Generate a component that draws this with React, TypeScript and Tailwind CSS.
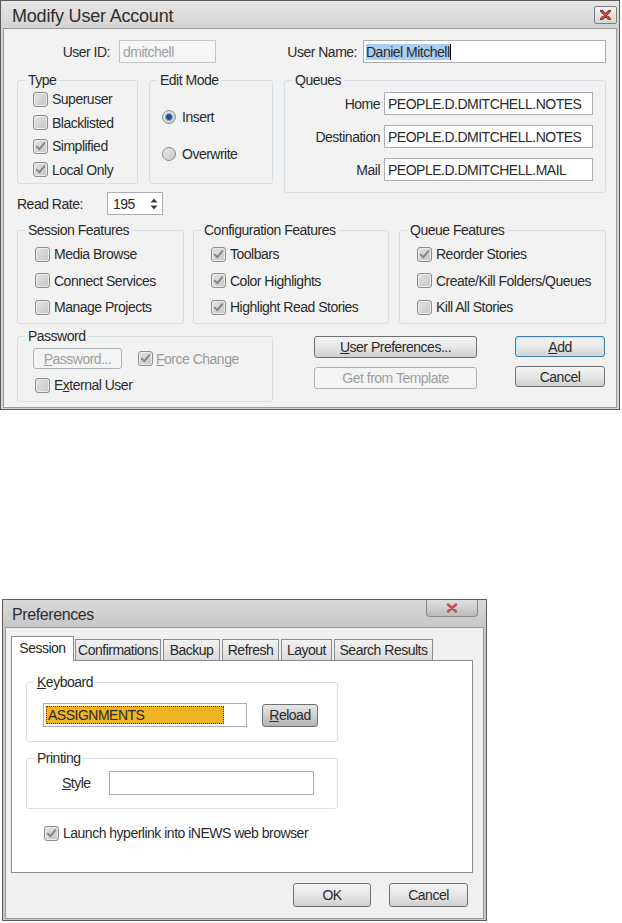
import React from "react";

function CheckBox({ checked }: { checked?: boolean }) {
  return (
    <span className="flex h-[15px] w-[15px] shrink-0 items-center justify-center rounded-[3px] border border-[#8a8b8b] bg-linear-to-br from-[#e4e4e4] to-[#c6c6c6] shadow-[inset_0_0_0_1px_#ececec]">
      {checked && (
        <svg width="11" height="11" viewBox="0 0 11 11">
          <path d="M1.8 5.6 L4.4 8.2 L9.3 2.2" fill="none" stroke="#858585" strokeWidth="2" strokeLinecap="round" strokeLinejoin="round" />
        </svg>
      )}
    </span>
  );
}

function Check({ checked, label, gray, className }: { checked?: boolean; label: React.ReactNode; gray?: boolean; className?: string }) {
  return (
    <div className={"flex h-[20px] items-center gap-[4px] " + (className ?? "")}>
      <CheckBox checked={checked} />
      <span className={gray ? "text-[#9a9a9a]" : ""}>{label}</span>
    </div>
  );
}

function Radio({ checked }: { checked?: boolean }) {
  return (
    <span className="flex h-[14px] w-[14px] shrink-0 items-center justify-center rounded-full border border-[#8a8b8b] bg-linear-to-br from-[#ebebeb] to-[#c8c8c8]">
      {checked && <span className="h-[8px] w-[8px] rounded-full border-[1.5px] border-[#86b1d8] bg-[#21507f]" />}
    </span>
  );
}

function Group({ title, className, children }: { title: React.ReactNode; className?: string; children?: React.ReactNode }) {
  return (
    <fieldset className={"shrink-0 rounded-[3px] border border-[#d5dfe5] " + (className ?? "")}>
      <legend className="ml-[7px] px-[3px] leading-[16px]">{title}</legend>
      {children}
    </fieldset>
  );
}

function Btn({ children, className, disabled, def, dark }: { children: React.ReactNode; className?: string; disabled?: boolean; def?: boolean; dark?: boolean }) {
  let cls = "flex shrink-0 items-center justify-center rounded-[3px] border ";
  if (disabled) cls += "border-[#adb2b5] bg-[#f4f4f4] text-[#a0a0a0] ";
  else if (def) cls += "border-[#3c7fb1] bg-linear-to-b from-[#f2f2f2] via-[#e9e9e9] to-[#d2d2d2] shadow-[inset_0_0_0_1px_#bfe3f7] ";
  else if (dark) cls += "border-[#6f6f6f] bg-linear-to-b from-[#e6e6e6] via-[#cfcfcf] to-[#b4b4b4] ";
  else cls += "border-[#707070] bg-linear-to-b from-[#f3f3f3] via-[#e7e7e7] to-[#cfcfcf] ";
  return <div className={cls + (className ?? "")}>{children}</div>;
}

function Tab({ children, className }: { children: React.ReactNode; className?: string }) {
  return (
    <div className={"flex h-[21px] shrink-0 items-center justify-center border border-b-0 border-[#898c95] bg-linear-to-b from-[#f3f3f3] to-[#dadada] " + (className ?? "")}>
      {children}
    </div>
  );
}

export default function App() {
  const queues: [string, string][] = [
    ["Home", "PEOPLE.D.DMITCHELL.NOTES"],
    ["Destination", "PEOPLE.D.DMITCHELL.NOTES"],
    ["Mail", "PEOPLE.D.DMITCHELL.MAIL"],
  ];
  return (
    <div className="flex min-h-[923px] w-[622px] flex-col bg-white font-['Liberation_Sans',Arial,sans-serif] text-[14px] leading-[16px] tracking-[-0.5px] text-[#2a2a2a]">
      {/* Modify User Account dialog */}
      <div className="flex h-[410px] w-[620px] flex-col border border-[#5b5b5b] bg-[#d2d2d2]">
        <div className="flex h-[27px] shrink-0 items-center justify-between bg-linear-to-b from-[#e6e6e6] to-[#d4d4d4] pl-[11px] pr-[2px]">
          <span className="pt-[2px] text-[18px] leading-[20px] tracking-[-0.2px] text-[#2e2e2e]">Modify User Account</span>
          <div className="flex h-[18px] w-[23px] items-center justify-center rounded-[2px] border border-[#7b7b7b] bg-linear-to-b from-[#f4f4f4] to-[#d5d5d5]">
            <svg width="11" height="10" viewBox="0 0 11 10">
              <path d="M1.5 1 L9.5 9 M9.5 1 L1.5 9" stroke="#7a2a22" strokeWidth="3" strokeLinecap="round" />
              <path d="M1.5 1 L9.5 9 M9.5 1 L1.5 9" stroke="#d0473a" strokeWidth="1.6" strokeLinecap="round" />
            </svg>
          </div>
        </div>
        <div className="mx-[2px] mb-[1px] flex flex-1 flex-col border border-[#9a9a9a] bg-[#f2f2f2] pl-[13px]">
          {/* row 1 */}
          <div className="mt-[11px] flex h-[23px] items-center">
            <span className="w-[93px] text-right">User ID:</span>
            <div className="ml-[9px] flex h-[23px] w-[97px] items-center border border-[#c6c6c6] bg-[#f6f6f6] pl-[3px] text-[#a0a0a0]">dmitchell</div>
            <span className="w-[141px] text-right">User Name:</span>
            <div className="ml-[6px] flex h-[23px] w-[243px] items-center border border-[#abadb3] bg-white pl-[2px]">
              <span className="bg-[#a9cdf0] leading-[16px]">Daniel Mitchell</span>
              <span className="h-[16px] w-[1px] bg-black" />
            </div>
          </div>

          {/* row 2 */}
          <div className="mt-[9px] flex items-start">
            <div className="flex flex-col">
              <div className="flex gap-[11px]">
                <Group title="Type" className="h-[112px] w-[121px]">
                  <div className="mt-[1px] flex flex-col gap-[3.5px] pl-[15px]">
                    <Check label="Superuser" />
                    <Check label="Blacklisted" />
                    <Check checked label="Simplified" />
                    <Check checked label="Local Only" />
                  </div>
                </Group>
                <Group title="Edit Mode" className="h-[112px] w-[124px]">
                  <div className="mt-[19px] flex flex-col gap-[17px] pl-[12px]">
                    <div className="flex h-[20px] items-center gap-[6px]">
                      <Radio checked />
                      <span>Insert</span>
                    </div>
                    <div className="flex h-[20px] items-center gap-[6px]">
                      <Radio />
                      <span>Overwrite</span>
                    </div>
                  </div>
                </Group>
              </div>
              <div className="mt-[8px] flex h-[23px] items-center">
                <span className="w-[90px]">Read Rate:</span>
                <div className="flex h-[23px] w-[56px] items-center justify-between border border-[#abadb3] bg-white pl-[5px] pr-[4px]">
                  <span>195</span>
                  <svg width="8" height="14" viewBox="0 0 8 14">
                    <path d="M4 1.5 L7.5 5.5 L0.5 5.5 Z M4 12.5 L7.5 8.5 L0.5 8.5 Z" fill="#404040" />
                  </svg>
                </div>
              </div>
            </div>
            <Group title="Queues" className="ml-[11px] h-[121px] w-[322px]">
              <div className="mt-[4px] flex flex-col gap-[10px]">
                {queues.map(([l, v]) => (
                  <div key={l} className="flex items-center">
                    <span className="w-[95px] text-right">{l}</span>
                    <div className="ml-[4px] flex h-[23px] w-[209px] items-center border border-[#abadb3] bg-white pl-[3px]">{v}</div>
                  </div>
                ))}
              </div>
            </Group>
          </div>

          {/* row 3 */}
          <div className="mt-[7px] flex">
            <Group title="Session Features" className="h-[102px] w-[167px]">
              <div className="mt-[6px] flex flex-col gap-[6.5px] pl-[17px]">
                <Check label="Media Browse" />
                <Check label="Connect Services" />
                <Check label="Manage Projects" />
              </div>
            </Group>
            <Group title="Configuration Features" className="ml-[9px] h-[102px] w-[196px]">
              <div className="mt-[6px] flex flex-col gap-[6.5px] pl-[17px]">
                <Check checked label="Toolbars" />
                <Check checked label="Color Highlights" />
                <Check checked label="Highlight Read Stories" />
              </div>
            </Group>
            <Group title="Queue Features" className="ml-[10px] h-[102px] w-[207px]">
              <div className="mt-[6px] flex flex-col gap-[6.5px] pl-[17px]">
                <Check checked label="Reorder Stories" />
                <Check label="Create/Kill Folders/Queues" />
                <Check label="Kill All Stories" />
              </div>
            </Group>
          </div>

          {/* row 4 */}
          <div className="mt-[4px] flex items-start">
            <Group title="Password" className="h-[74px] w-[256px]">
              <div className="mt-[4px] flex items-center pl-[15px]">
                <Btn disabled className="h-[21px] w-[89px]">
                  <span>
                    <u>P</u>assword...
                  </span>
                </Btn>
                <div className="ml-[16px] flex items-center gap-[3px]">
                  <CheckBox checked />
                  <span className="text-[#9a9a9a]">
                    <u>F</u>orce Change
                  </span>
                </div>
              </div>
              <Check
                className="ml-[17px] mt-[6px]"
                label={
                  <>
                    E<u>x</u>ternal User
                  </>
                }
              />
            </Group>
            <div className="ml-[41px] mt-[8px] flex flex-col gap-[9px]">
              <Btn className="h-[22px] w-[163px]">
                <span>
                  <u>U</u>ser Preferences...
                </span>
              </Btn>
              <Btn disabled className="h-[22px] w-[163px]">
                Get from Template
              </Btn>
            </div>
            <div className="ml-[38px] mt-[8px] flex flex-col gap-[9px]">
              <Btn def className="h-[21px] w-[90px]">
                <span>
                  <u>A</u>dd
                </span>
              </Btn>
              <Btn className="h-[21px] w-[90px]">Cancel</Btn>
            </div>
          </div>
        </div>
      </div>

      {/* Preferences dialog */}
      <div className="ml-[2px] mt-[189px] flex h-[322px] w-[485px] flex-col border border-[#5b5b5b] bg-[#c8c8c8]">
        <div className="flex h-[27px] shrink-0 items-start justify-between bg-linear-to-b from-[#dadada] to-[#c6c6c6] pl-[9px] pr-[8px]">
          <span className="mt-[6px] text-[16px] leading-[18px] tracking-[-0.4px] text-[#2e2e2e]">Preferences</span>
          <div className="flex h-[17px] w-[52px] items-center justify-center rounded-b-[4px] border border-t-0 border-[#8a8a8a] bg-linear-to-b from-[#dedede] to-[#bdbdbd]">
            <svg width="12" height="10" viewBox="0 0 12 10">
              <path d="M2 1.5 L10 8.5 M10 1.5 L2 8.5" stroke="#c64a4f" strokeWidth="2.4" strokeLinecap="round" />
            </svg>
          </div>
        </div>
        <div className="mx-[2px] mb-[1px] flex flex-1 flex-col border border-[#9a9a9a] bg-[#f0f0f0]">
          {/* tabs */}
          <div className="ml-[5px] mt-[8px] flex items-end">
            <div className="relative z-10 -mb-px flex h-[25px] w-[63px] shrink-0 items-center justify-center border border-b-0 border-[#898c95] bg-white pb-[2px]">
              Session
            </div>
            <Tab className="ml-[1px] w-[86px]">Confirmations</Tab>
            <Tab className="ml-[2px] w-[57px]">Backup</Tab>
            <Tab className="ml-[2px] w-[57px]">Refresh</Tab>
            <Tab className="ml-[2px] w-[51px]">Layout</Tab>
            <Tab className="ml-[2px] w-[99px]">Search Results</Tab>
          </div>
          {/* panel */}
          <div className="ml-[5px] flex h-[213px] w-[462px] flex-col border border-[#898c95] bg-white">
            <Group
              title={
                <>
                  <u>K</u>eyboard
                </>
              }
              className="ml-[14px] mt-[13px] h-[68px] w-[312px]"
            >
              <div className="mt-[13px] flex items-center pl-[16px]">
                <div className="flex h-[24px] w-[204px] items-center border border-[#abadb3] bg-white">
                  <div className="ml-[2px] flex h-[18px] w-[178px] items-center border border-dotted border-[#3a3a3a] bg-[#f0b323] pl-[1px]">
                    ASSIGNMENTS
                  </div>
                </div>
                <Btn dark className="ml-[15px] h-[23px] w-[56px]">
                  <span>
                    <u>R</u>eload
                  </span>
                </Btn>
              </div>
            </Group>
            <Group title="Printing" className="ml-[14px] mt-[8px] h-[59px] w-[312px]">
              <div className="mt-[5px] flex items-center pl-[35px]">
                <span className="w-[47px]">
                  <u>S</u>tyle
                </span>
                <div className="h-[24px] w-[205px] border border-[#abadb3] bg-white" />
              </div>
            </Group>
            <Check checked className="ml-[32px] mt-[14px]" label="Launch hyperlink into iNEWS web browser" />
          </div>
          {/* footer */}
          <div className="mt-[10px] flex justify-end gap-[18px] pr-[15px]">
            <Btn className="h-[24px] w-[78px]">OK</Btn>
            <Btn className="h-[24px] w-[79px]">Cancel</Btn>
          </div>
        </div>
      </div>
    </div>
  );
}
